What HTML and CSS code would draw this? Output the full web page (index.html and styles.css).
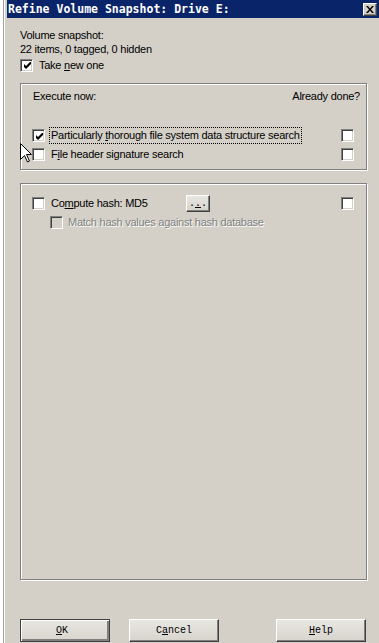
FILE: index.html
```html
<!DOCTYPE html>
<html lang="en">
<head>
  <meta charset="UTF-8" />
  <title>Refine Volume Snapshot</title>
  <link rel="stylesheet" href="styles.css">
</head>
<body>

<div class="screen">
  <div class="behind"></div>

  <div class="dialog">
    <div class="titlebar">
      <span class="title">Refine Volume Snapshot: Drive E:</span>
      <span class="close">
        <svg width="8" height="7" viewBox="0 0 8 7"><path d="M0 0h2l2 2.5L6 0h2L5 3.5 8 7H6L4 4.5 2 7H0l3-3.5z" fill="#000"/></svg>
      </span>
    </div>

    <div class="content">
      <div class="info">Volume snapshot:<br>22 items, 0 tagged, 0 hidden</div>
      <label class="check take">
        <span class="box checked"><svg width="7" height="7" viewBox="0 0 7 7"><path d="M0 2L2 4L7 -1V2L2 7L0 5Z" fill="#000"/></svg></span>
        <span class="txt">Take <u>n</u>ew one</span>
      </label>

      <div class="group group-exec">
        <div class="group-head">
          <span>Execute now:</span>
          <span>Already done?</span>
        </div>
        <div class="opt-row first">
          <span class="box checked"><svg width="7" height="7" viewBox="0 0 7 7"><path d="M0 2L2 4L7 -1V2L2 7L0 5Z" fill="#000"/></svg></span>
          <span class="txt focus">Particularly <u>t</u>horough file system data structure search</span>
          <span class="box done"></span>
        </div>
        <div class="opt-row">
          <span class="box"></span>
          <span class="txt">F<u>i</u>le header signature search</span>
          <span class="box done"></span>
        </div>
      </div>

      <div class="group group-hash">
        <div class="opt-row">
          <span class="box"></span>
          <span class="txt hash-label">Co<u>m</u>pute hash: MD5</span>
          <span class="btn-more">.<u>.</u>.</span>
          <span class="box done"></span>
        </div>
        <div class="opt-row sub">
          <span class="box disabled"></span>
          <span class="txt dim">Match hash values against hash database</span>
        </div>
      </div>

      <div class="buttons">
        <span class="btn default"><u>O</u>K</span>
        <span class="btn cancel">C<u>a</u>ncel</span>
        <span class="btn help"><u>H</u>elp</span>
      </div>
    </div>
  </div>

  <svg class="cursor" width="13" height="20" viewBox="0 0 13 20">
    <path d="M0.5 0.5V16.5L4.5 12.5L7.5 19L9.5 18L6.5 11.5H11.5Z" fill="#fff" stroke="#000" stroke-width="1"/>
  </svg>
</div>

</body>
</html>
```

FILE: styles.css
```css
html, body {
  margin: 0; padding: 0;
  background: #fff;
}
.screen {
  position: relative;
  display: flex;
  width: 379px; height: 643px;
  overflow: hidden;
  font-family: "Liberation Sans", Arial, sans-serif;
  font-size: 11px;
  letter-spacing: -0.25px;
  color: #000;
}
.behind {
  width: 3px;
  flex: none;
  background: #fff;
  border-right: 1px solid #a0a0a0;
}
.dialog {
  flex: 1;
  display: flex;
  flex-direction: column;
  background: #d4d0c8;
  border-left: 1px solid #fff;
  padding-left: 2px;
}
.titlebar {
  height: 18px;
  flex: none;
  display: flex;
  align-items: center;
  background: #0a246a;
  padding-left: 1px;
}
.title {
  flex: 1;
  color: #fff;
  font-family: "DejaVu Sans Mono", "Liberation Mono", monospace;
  font-weight: bold;
  font-size: 11.5px;
  letter-spacing: 0;
  line-height: 18px;
}
.close {
  width: 14px; height: 13px;
  box-sizing: border-box;
  margin-right: 2px;
  display: flex;
  align-items: center;
  justify-content: center;
  background: #d4d0c8;
  border: 1px solid;
  border-color: #fff #404040 #404040 #fff;
  box-shadow: inset -1px -1px 0 #808080;
}

.content {
  flex: 1;
  display: flex;
  flex-direction: column;
  padding: 10px 12px 1px 13px;
}
.info {
  line-height: 14px;
}
.check {
  display: flex;
  align-items: center;
  margin-top: 2px;
  height: 14px;
}
.check .txt { margin-left: 6px; }

.box {
  width: 13px; height: 13px;
  flex: none;
  box-sizing: border-box;
  display: flex;
  align-items: center;
  justify-content: center;
  background: #fff;
  border: 1px solid;
  border-color: #808080 #fff #fff #808080;
  box-shadow: inset 1px 1px 0 #404040, inset -1px -1px 0 #d4d0c8;
}
.box svg { margin: 1px 0 0 1px; }
.box.disabled { background: #d4d0c8; }

.group {
  box-sizing: border-box;
  border: 1px solid #808080;
  box-shadow: 1px 1px 0 #fff, inset 1px 1px 0 #fff;
}
.group-exec {
  height: 87px;
  margin-top: 11px;
  padding: 5px 0 0 0;
}
.group-head {
  display: flex;
  justify-content: space-between;
  line-height: 14px;
  padding: 0 6px 0 12px;
}
.opt-row {
  display: flex;
  align-items: center;
  height: 17px;
  margin-top: 2px;
  padding: 0 12px 0 11px;
}
.opt-row.first { margin-top: 24px; }
.opt-row .txt {
  margin-left: 4px;
  padding: 0 1px;
  line-height: 15px;
  border: 1px dotted transparent;
}
.opt-row .txt.focus { border-color: #000; }
.opt-row .done { margin-left: auto; }

.group-hash {
  flex: 1;
  margin-top: 13px;
  padding-top: 9px;
}
.hash-label { width: 133px; }
.btn-more {
  width: 24px; height: 17px;
  box-sizing: border-box;
  display: flex;
  justify-content: center;
  align-items: flex-end;
  padding-bottom: 2px;
  font-family: "Liberation Mono", monospace;
  font-size: 10px;
  letter-spacing: 0;
  line-height: 10px;
  background: linear-gradient(#e8e6e1, #d6d3cc);
  border: 1px solid;
  border-color: #fff #404040 #404040 #fff;
  box-shadow: inset -1px -1px 0 #808080;
}
.opt-row.sub { padding-left: 29px; }
.opt-row .txt.dim {
  color: #808080;
  text-shadow: 1px 1px 0 #fff;
  margin-left: 3px;
}

.buttons {
  display: flex;
  margin-top: 39px;
}
.btn {
  width: 90px; height: 23px;
  box-sizing: border-box;
  display: flex;
  align-items: center;
  justify-content: center;
  font-family: "Liberation Mono", "Courier New", monospace;
  font-size: 10px;
  letter-spacing: 0;
  background: linear-gradient(#e9e7e2, #d7d4cd);
  border: 1px solid;
  border-color: #fff #404040 #404040 #fff;
  box-shadow: inset -1px -1px 0 #808080;
}
.btn.default {
  border: 1px solid #404040;
  box-shadow: inset 1px 1px 0 #fff, inset -2px -2px 0 #808080;
  padding-right: 6px;
}
.btn.cancel { margin-left: 19px; }
.btn.help { margin-left: 57px; }

.cursor {
  position: absolute;
  left: 20px; top: 143px;
}
```
